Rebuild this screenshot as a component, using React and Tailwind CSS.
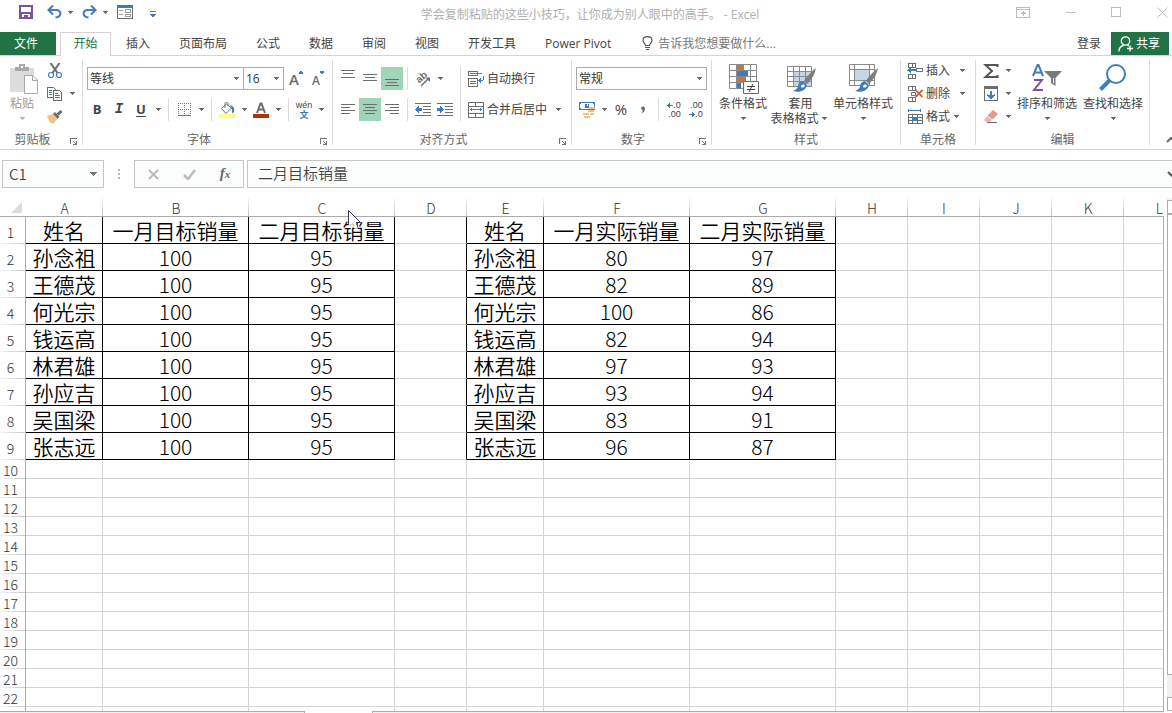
import React from "react";

const tabs = ["插入", "页面布局", "公式", "数据", "审阅", "视图", "开发工具", "Power Pivot"];

const columns = ["A", "B", "C", "D", "E", "F", "G", "H", "I", "J", "K", "L"];

const colWidths = [
  "w-[77px]", "w-[146px]", "w-[146px]", "w-[72px]", "w-[77px]", "w-[146px]",
  "w-[146px]", "w-[72px]", "w-[72px]", "w-[72px]", "w-[72px]", "",
];

const rows = [
  ["姓名", "一月目标销量", "二月目标销量", "", "姓名", "一月实际销量", "二月实际销量"],
  ["孙念祖", 100, 95, "", "孙念祖", 80, 97],
  ["王德茂", 100, 95, "", "王德茂", 82, 89],
  ["何光宗", 100, 95, "", "何光宗", 100, 86],
  ["钱运高", 100, 95, "", "钱运高", 82, 94],
  ["林君雄", 100, 95, "", "林君雄", 97, 93],
  ["孙应吉", 100, 95, "", "孙应吉", 93, 94],
  ["吴国梁", 100, 95, "", "吴国梁", 83, 91],
  ["张志远", 100, 95, "", "张志远", 96, 87],
];

// the last one is the sliver of a row above the sheet tabs
const emptyRows = [10, 11, 12, 13, 14, 15, 16, 17, 18, 19, 20, 21, 22, ""];

const GRAY = "#6d6d6d";
const BLUE = "#3e7cbc";

function Svg({ w, h, crisp, className = "", children }) {
  return (
    <svg
      width={w}
      height={h}
      viewBox={`0 0 ${w} ${h}`}
      fill="none"
      shapeRendering={crisp ? "crispEdges" : "auto"}
      className={`shrink-0 ${className}`}
      aria-hidden="true"
    >
      {children}
    </svg>
  );
}

function Caret({ light }) {
  return (
    <span className="flex w-3 shrink-0 items-center justify-center">
      <Svg w={5} h={3} crisp>
        <path d="M0 0H5V1H4V2H3V3H2V2H1V1H0Z" fill={light ? "#b5b5b5" : "#6a6a6a"} />
      </Svg>
    </span>
  );
}

function Sep() {
  return <div className="mx-1 w-px self-stretch bg-[#dcdcdc]" />;
}

/* small square ribbon button, optionally with a drop-down arrow */
function Tool({ label, active, caret, children }) {
  return (
    <button aria-label={label} className="flex h-[23px] shrink-0 items-center">
      <span className={`flex h-[23px] w-[22px] items-center justify-center ${active ? "bg-[#9fd5b7]" : ""}`}>
        {children}
      </span>
      {caret && <Caret />}
    </button>
  );
}

function Group({ title, width, launcher, children }) {
  return (
    <section className={`flex shrink-0 ${width}`}>
      <div className="flex flex-1 flex-col">
        <div className="flex h-[74px]">{children}</div>
        <div className="flex h-[19px] items-center">
          <span className={`flex-1 text-center text-[#666] ${launcher ? "pr-[5px]" : ""}`}>{title}</span>
          {launcher && (
            <button aria-label={`${title}设置`} className="w-3 pt-1">
              <Svg w={8} h={8} crisp>
                <path d="M0 0H7V1H1V6H0Z" fill="#777" />
                <path d="M3 3H4V4H5V5H6V3H7V7H3V6H5V5H4V4H3Z" fill="#777" />
              </Svg>
            </button>
          )}
        </div>
      </div>
      <div className="my-1 w-px bg-[#dcdcdc]" />
    </section>
  );
}

function Combo({ label, value, width }) {
  return (
    <div className={`relative h-[23px] ${width}`}>
      <select
        aria-label={label}
        className="h-full w-full appearance-none border border-[#ababab] bg-white pl-0.5 text-[12px] text-[#333] outline-none"
      >
        <option>{value}</option>
      </select>
      <span className="pointer-events-none absolute inset-y-0 right-0.5 flex items-center">
        <Caret />
      </span>
    </div>
  );
}

function Lines({ spec }) {
  return (
    <Svg w={14} h={23} crisp>
      {spec.map(([x, y, w], i) => (
        <rect key={i} x={x} y={y} width={w} height="1" fill={GRAY} />
      ))}
    </Svg>
  );
}

function BigButton({ width, icon, lines, light }) {
  return (
    <button className={`flex shrink-0 flex-col items-center pt-[6px] ${width} ${light ? "text-[#9a9a9a]" : ""}`}>
      {icon}
      <span className="mt-0.5 leading-[15px] whitespace-nowrap">{lines[0]}</span>
      <span className="flex h-[15px] items-center leading-[15px] whitespace-nowrap">
        {lines[1]}
        <Caret light={light} />
      </span>
    </button>
  );
}

const PasteIcon = () => (
  <Svg w={32} h={32}>
    <path d="M4 6H28V30H4Z" fill="#dcdcdc" />
    <path d="M9 9V5H13V2H19V5H23V9Z" fill="#a9a9a9" />
    <path d="M15 4H17V6H15Z" fill="#fff" />
    <path d="M18.500 13.500H27L31.500 18V31.500H18.500Z" fill="#fff" stroke="#a9a9a9" />
    <path d="M26.500 13.500V18.500H31.500" stroke="#a9a9a9" />
  </Svg>
);

const Brush = () => (
  <>
    <path d="M31 6C27 9 22 14 19 19L22 22C27 17 30 12 31 6Z" fill="#7d7d7d" />
    <path d="M18 19C15 19 13 22 13 25C12 27 10 28 8 29C14 31 21 29 22 23Z" fill={BLUE} />
    <path d="M16 24C17 22 19 22 20 23.500C19 26 17 26 16 25Z" fill="#fff" />
  </>
);

const ConditionalIcon = () => (
  <Svg w={32} h={32}>
    <path d="M2.500 2.500H29.500V26.500H2.500ZM2 8.500H30M2 14.500H30M2 20.500H30M9.500 2V27M16.500 2V27M23.500 2V27" stroke="#8a8a8a" />
    <path d="M10 3H16V8H10Z" fill="#c8743c" />
    <path d="M10 9H21V14H10Z" fill={BLUE} />
    <path d="M10 15H19V20H10Z" fill="#c8743c" />
    <path d="M10 21H14V26H10Z" fill={BLUE} />
    <path d="M16.500 19.500H31.500V31.500H16.500Z" fill="#fff" stroke="#6d6d6d" />
    <path d="M20 24.500H28M20 27.500H28M26 22L22 30" stroke="#444" />
  </Svg>
);

const TableStyleIcon = () => (
  <Svg w={32} h={32}>
    <path d="M9 10H27V25H9Z" fill="#c6d5e2" />
    <path d="M2.500 4.500H26.500V24.500H2.500ZM2 9.500H27M2 14.500H27M2 19.500H27M8.500 4V25M14.500 4V25M20.500 4V25" stroke="#8a8a8a" />
    <Brush />
  </Svg>
);

const CellStyleIcon = () => (
  <Svg w={32} h={32}>
    <path d="M8 8H22V18H8Z" fill="#c6d5e2" />
    <path d="M2.500 2.500H27.500V23.500H2.500ZM2 7.500H28M2 18.500H28M7.500 2V24M22.500 2V24" stroke="#8a8a8a" />
    <Brush />
  </Svg>
);

const SortIcon = () => (
  <Svg w={32} h={32}>
    <path d="M2 14L6.500 3H7.500L12 14M3.500 10.500H10.500" stroke={BLUE} strokeWidth="2" />
    <path d="M3 18H11L3 28H12" stroke="#7b559b" strokeWidth="2" />
    <path d="M13 9H31L24.500 16V24L20 21V16Z" fill="#7a7a7a" />
    <path d="M22 16H23V21H22Z" fill="#fff" />
  </Svg>
);

const FindIcon = () => (
  <Svg w={32} h={32}>
    <circle cx="19" cy="12" r="9" stroke={BLUE} strokeWidth="2" />
    <path d="M12.500 18.500L3.500 27.500" stroke={BLUE} strokeWidth="4" />
  </Svg>
);

function TitleBar() {
  return (
    <header className="flex h-8 shrink-0 items-start">
      <div className="flex h-6 w-[172px] items-center pl-[19px]">
        <button aria-label="保存">
          <Svg w={14} h={14} crisp>
            <path d="M0 0H14V14H0ZM2 2V7H12V2ZM3 9V12H5V10H9V12H11V9Z" fill="#7b559b" fillRule="evenodd" />
            <path d="M7 10H8V12H7Z" fill="#7b559b" />
          </Svg>
        </button>
        <button aria-label="撤消" className="ml-[14px] flex items-center">
          <Svg w={15} h={14}>
            <path d="M2 5H9C15 5 15 12 8.500 12.500" stroke={BLUE} strokeWidth="2" />
            <path d="M6 0.500L1.500 5L6 9.500" stroke={BLUE} strokeWidth="2" />
          </Svg>
          <span className="pl-0.5"><Caret /></span>
        </button>
        <button aria-label="恢复" className="ml-1.5 flex items-center">
          <Svg w={15} h={14}>
            <path d="M13 5H6C0 5 0 12 6.500 12.500" stroke={BLUE} strokeWidth="2" />
            <path d="M9 0.500L13.500 5L9 9.500" stroke={BLUE} strokeWidth="2" />
          </Svg>
          <span className="pl-0.5"><Caret /></span>
        </button>
        <button aria-label="记录单" className="ml-1.5">
          <Svg w={16} h={14} crisp>
            <path d="M0 0H16V14H0ZM1 3V13H15V3Z" fill={GRAY} fillRule="evenodd" />
            <path d="M1 1H15V3H1Z" fill={BLUE} />
            <path d="M2 5H6V6H2ZM2 9H6V10H2ZM8 4H14V8H8ZM9 5V7H13V5ZM8 9H14V12H8ZM9 10V11H13V10Z" fill="#9a9a9a" fillRule="evenodd" />
          </Svg>
        </button>
        <button aria-label="自定义快速访问工具栏" className="ml-[17px] pt-1">
          <Svg w={6} h={6} crisp>
            <path d="M0 0H6V1H0ZM0 3H6V4H5V5H4V6H2V5H1V4H0Z" fill={BLUE} />
          </Svg>
        </button>
      </div>
      <h1 className="flex-1 text-center leading-[29px] text-[#b0b0b0]">
        学会复制粘贴的这些小技巧，让你成为别人眼中的高手。 - Excel
      </h1>
      <div className="flex h-6 w-[164px] items-center justify-between pr-1 pl-2">
        <button aria-label="功能区显示选项">
          <Svg w={14} h={11} crisp>
            <path d="M0.500 0.500H13.500V10.500H0.500ZM0 2.500H14" stroke="#bdbdbd" />
            <path d="M7 4H8V9H7ZM6 5H9V6H6ZM5 6H10V7H5Z" fill="#bdbdbd" />
          </Svg>
        </button>
        <button aria-label="最小化">
          <Svg w={10} h={10} crisp><path d="M0 5.500H10" stroke="#bdbdbd" /></Svg>
        </button>
        <button aria-label="最大化">
          <Svg w={10} h={10} crisp><path d="M0.500 0.500H9.500V9.500H0.500Z" stroke="#bdbdbd" /></Svg>
        </button>
        <button aria-label="关闭">
          <Svg w={11} h={11}><path d="M0.500 0.500L10.500 10.500M10.500 0.500L0.500 10.500" stroke="#bdbdbd" /></Svg>
        </button>
      </div>
    </header>
  );
}

function TabBar() {
  return (
    <nav className="flex h-6 shrink-0 items-stretch border-b border-[#d4d4d4] text-[#444]">
      <button className="w-14 bg-[#217346] pr-1 text-white">文件</button>
      <button className="-mb-px ml-1 w-[51px] border border-b-0 border-[#d4d4d4] bg-white pb-0.5 text-[#217346]">
        开始
      </button>
      <div className="ml-[15px] flex gap-[29px]">
        {tabs.map((t) => (
          <button key={t} className="whitespace-nowrap">{t}</button>
        ))}
      </div>
      <label className="ml-[31px] flex flex-1 items-center gap-[5px]">
        <Svg w={11} h={15}>
          <path d="M3.500 9.500C3.500 7.500 1 7 1 4.500C1 2.200 3 0.700 5.500 0.700S10 2.200 10 4.500C10 7 7.500 7.500 7.500 9.500Z" stroke="#555" strokeWidth="1.200" />
          <path d="M3 11.500H8M4 13.500H7" stroke="#555" />
        </Svg>
        <input
          aria-label="告诉我您想要做什么"
          placeholder="告诉我您想要做什么..."
          className="w-40 bg-transparent outline-none placeholder:text-[#777]"
        />
      </label>
      <button className="mr-[10px]">登录</button>
      <button className="mr-[3px] flex w-[58px] items-center gap-0.5 bg-[#217346] pl-[7px] text-white">
        <Svg w={16} h={16}>
          <circle cx="7.500" cy="5" r="4.200" stroke="#fff" strokeWidth="1.300" />
          <path d="M1 15.500C1 12 3 10 5.500 9.500M9.500 9.200L11 10M9 12.500H15M12 9.500V15.500" stroke="#fff" strokeWidth="1.300" />
        </Svg>
        共享
      </button>
    </nav>
  );
}

function Ribbon() {
  return (
    <div className="flex shrink-0 overflow-hidden border-b border-[#d4d4d4] text-[#444]">
      <Group title="剪贴板" width="w-[83px]" launcher>
        <BigButton width="w-[44px]" light icon={<PasteIcon />} lines={["粘贴", ""]} />
        <div className="flex flex-col pt-[3px]">
          <Tool label="剪切">
            <Svg w={16} h={16}>
              <path d="M3.500 0L10.500 10M12.500 0L5.500 10" stroke={GRAY} strokeWidth="2" />
              <circle cx="4" cy="12" r="2.500" stroke={BLUE} strokeWidth="1.200" />
              <circle cx="12" cy="12" r="2.500" stroke={BLUE} strokeWidth="1.200" />
            </Svg>
          </Tool>
          <Tool label="复制" caret>
            <Svg w={16} h={14} crisp>
              <path d="M0.500 0.500H6.500L8.500 2.500V10.500H0.500Z" fill="#fff" stroke={GRAY} />
              <path d="M2 3.500H5M2 5.500H5M2 7.500H5" stroke={BLUE} />
              <path d="M6.500 3.500H12.500L14.500 5.500V13.500H6.500Z" fill="#fff" stroke={GRAY} />
              <path d="M8 6.500H11M8 8.500H13M8 10.500H13" stroke={BLUE} />
            </Svg>
          </Tool>
          <Tool label="格式刷">
            <Svg w={16} h={14}>
              <path d="M0 6L6 4L10 9L6 14L3 12.500Z" fill="#f6bd7c" />
              <path d="M6 4L8 2L12.500 6.500L10.500 9Z" fill={GRAY} />
              <path d="M9.500 3.500L13.500 0L15.500 2L12 5.500Z" fill={GRAY} />
            </Svg>
          </Tool>
        </div>
      </Group>

      <Group title="字体" width="w-[250px]" launcher>
        <div className="flex flex-col gap-2 pt-[11px] pl-[3px]">
          <div className="flex items-center pl-px">
            <Combo label="字体" value="等线" width="w-[157px]" />
            <Combo label="字号" value="16" width="-ml-px w-[41px]" />
            <div className="flex pl-px">
              <Tool label="增大字号">
                <span className="pt-0.5 text-[15px] font-semibold text-[#6d6d6d]">A</span>
                <Svg w={4} h={3} crisp className="mb-3"><path d="M1 0H3V1H4V3H0V1H1Z" fill={BLUE} /></Svg>
              </Tool>
              <Tool label="减小字号">
                <span className="pt-1 text-[12px] font-semibold text-[#6d6d6d]">A</span>
                <Svg w={4} h={3} crisp className="mb-3"><path d="M0 0H4V2H3V3H1V2H0Z" fill={BLUE} /></Svg>
              </Tool>
            </div>
          </div>
          <div className="flex items-center">
            <Tool label="加粗"><span className="text-[13px] font-bold">B</span></Tool>
            <Tool label="倾斜"><span className="font-['Liberation_Mono',monospace] text-[14px] font-bold italic">I</span></Tool>
            <Tool label="下划线" caret><span className="text-[13px] font-bold underline underline-offset-2">U</span></Tool>
            <Sep />
            <Tool label="边框" caret>
              <Svg w={13} h={13} crisp>
                <path d="M0.500 0V13M6.500 0V13M12.500 0V13M0 0.500H13M0 6.500H13" stroke="#777" strokeDasharray="1 1" />
                <path d="M0 12.500H13" stroke="#777" />
              </Svg>
            </Tool>
            <Sep />
            <Tool label="填充颜色" caret>
              <Svg w={16} h={16}>
                <path d="M2.500 6.500L7.500 2L12.500 6L7 11.500Z" stroke={GRAY} />
                <path d="M6 6V1.500C6 0 9 0 9 1.500V4" stroke={GRAY} />
                <path d="M11 3C14 4 16 6 15 10L13 11.500V7Z" fill={BLUE} />
                <path d="M0 12H16V16H0Z" fill="#fdfd80" />
              </Svg>
            </Tool>
            <Tool label="字体颜色" caret>
              <Svg w={16} h={16}>
                <path d="M4 11L7.500 1.500H8.500L12 11M5.500 7.500H10.500" stroke={GRAY} strokeWidth="2" />
                <path d="M0 12H16V16H0Z" fill="#b83000" />
              </Svg>
            </Tool>
            <Sep />
            <Tool label="显示拼音字段" caret>
              <span className="flex flex-col items-center">
                <span className="font-['Liberation_Sans',sans-serif] text-[9px] leading-[10px]">wén</span>
                <span className="font-['Liberation_Sans','Noto_Sans_CJK_SC',sans-serif] text-[9px] leading-[10px] font-bold text-[#3e7cbc]">文</span>
              </span>
            </Tool>
          </div>
        </div>
      </Group>

      <Group title="对齐方式" width="w-[239px]" launcher>
        <div className="flex flex-col gap-2 pt-[11px] pl-1">
          <div className="flex">
            <Tool label="顶端对齐"><Lines spec={[[0, 3, 14], [2, 6, 10], [0, 10, 14]]} /></Tool>
            <Tool label="垂直居中"><Lines spec={[[0, 7, 14], [2, 10, 10], [0, 13, 14]]} /></Tool>
            <Tool label="底端对齐" active><Lines spec={[[0, 12, 14], [2, 15, 10], [0, 18, 14]]} /></Tool>
            <Sep />
            <Tool label="方向" caret>
              <Svg w={20} h={20}>
                <text
                  x="3"
                  y="12"
                  transform="rotate(-42 8 9)"
                  fontFamily="Liberation Sans, sans-serif"
                  fontSize="10"
                  fontWeight="bold"
                  fill={GRAY}
                >
                  ab
                </text>
                <path d="M8 17L15 10" stroke={GRAY} strokeWidth="1.500" />
                <path d="M12.500 8.500H17V13Z" fill={GRAY} />
              </Svg>
            </Tool>
          </div>
          <div className="flex">
            <Tool label="左对齐"><Lines spec={[[0, 6, 14], [0, 9, 9], [0, 12, 14], [0, 15, 9]]} /></Tool>
            <Tool label="居中" active><Lines spec={[[0, 6, 14], [2, 9, 10], [0, 12, 14], [2, 15, 10]]} /></Tool>
            <Tool label="右对齐"><Lines spec={[[0, 6, 14], [5, 9, 9], [0, 12, 14], [5, 15, 9]]} /></Tool>
            <Sep />
            <Tool label="减少缩进量">
              <Svg w={16} h={14} crisp>
                <path d="M0 0.500H16M8 3.500H16M8 6.500H16M8 9.500H16M0 12.500H16" stroke={GRAY} />
                <path d="M0 6H1V5H2V4H3V3H4V5H7V8H4V10H3V9H2V8H1V7H0Z" fill={BLUE} />
              </Svg>
            </Tool>
            <Tool label="增加缩进量">
              <Svg w={16} h={14} crisp>
                <path d="M0 0.500H16M8 3.500H16M8 6.500H16M8 9.500H16M0 12.500H16" stroke={GRAY} />
                <path d="M7 6H6V5H5V4H4V3H3V5H0V8H3V10H4V9H5V8H6V7H7Z" fill={BLUE} />
              </Svg>
            </Tool>
          </div>
        </div>
        <div className="flex h-[65px] pt-[10px]"><Sep /></div>
        <div className="flex flex-col gap-2 pt-[11px] pl-[3px]">
          <button className="flex h-[23px] items-center gap-[3px]">
            <Svg w={16} h={16} crisp>
              <path d="M0.500 0.500H9.500V4.500H0.500ZM0.500 7.500H9.500V15.500H0.500Z" stroke={GRAY} />
              <path d="M2 2.500H14M2 10.500H8M2 12.500H8" stroke={BLUE} />
              <path d="M15 5H16V9H15V10H13V12H12V11H11V10H10V9H11V8H12V7H13V9H15Z" fill={BLUE} />
            </Svg>
            自动换行
          </button>
          <button className="flex h-[23px] items-center gap-[3px]">
            <Svg w={16} h={16} crisp>
              <path d="M0.500 0.500H15.500V15.500H0.500ZM0 4.500H16M0 11.500H16M7.500 0V4M7.500 12V16" stroke={GRAY} />
              <path d="M2 7.500H14" stroke={BLUE} />
              <path d="M2 7H3V6H4V9H3V8H2ZM14 7H13V6H12V9H13V8H14Z" fill={BLUE} />
            </Svg>
            合并后居中
            <span className="pl-0.5"><Caret /></span>
          </button>
        </div>
      </Group>

      <Group title="数字" width="w-[140px]" launcher>
        <div className="flex flex-col gap-2 pt-[11px] pl-1">
          <Combo label="数字格式" value="常规" width="w-[131px]" />
          <div className="flex">
            <Tool label="会计数字格式" caret>
              <Svg w={16} h={16} crisp>
                <path d="M0 0H16V8H0ZM2 1V2H1V6H2V7H14V6H15V2H14V1Z" fill={BLUE} fillRule="evenodd" />
                <path d="M6 2H10V6H6Z" fill={BLUE} />
                <path d="M8 2H9V4H8Z" fill="#fff" />
                <path d="M10 5H16V7H10ZM9 8H15V10H9Z" fill="#f6bd7c" />
                <path d="M4 11H10V13H4ZM11 11H15V13H11ZM5 14H11V16H5Z" fill="#f6bd7c" />
              </Svg>
            </Tool>
            <Tool label="百分比样式"><span className="text-[15px]">%</span></Tool>
            <Tool label="千位分隔样式">
              <Svg w={6} h={8}><path d="M1 2A2 2 0 1 1 5 3C5 5 3.500 7 1 7.500C2 6.500 3 5.500 2.500 4A2 2 0 0 1 1 2Z" fill={GRAY} /></Svg>
            </Tool>
            <Sep />
            <Tool label="增加小数位数">
              <span className="flex flex-col items-end font-['Liberation_Sans',sans-serif] text-[9px] leading-[9px]">
                <span className="flex items-center">
                  <Svg w={6} h={5} crisp><path d="M0 2H1V1H2V0H3V2H6V3H3V5H2V4H1V3H0Z" fill={BLUE} /></Svg>.0
                </span>
                <span>.00</span>
              </span>
            </Tool>
            <Tool label="减少小数位数">
              <span className="flex flex-col items-end font-['Liberation_Sans',sans-serif] text-[9px] leading-[9px]">
                <span>.00</span>
                <span className="flex items-center">
                  <Svg w={6} h={5} crisp><path d="M6 2H5V1H4V0H3V2H0V3H3V5H4V4H5V3H6Z" fill={BLUE} /></Svg>.0
                </span>
              </span>
            </Tool>
          </div>
        </div>
      </Group>

      <Group title="样式" width="w-[189px]">
        <div className="flex pl-1">
          <BigButton width="w-[54px]" icon={<ConditionalIcon />} lines={["条件格式", ""]} />
          <BigButton width="w-[61px]" icon={<TableStyleIcon />} lines={["套用", "表格格式"]} />
          <BigButton width="w-[64px]" icon={<CellStyleIcon />} lines={["单元格样式", ""]} />
        </div>
      </Group>

      <Group title="单元格" width="w-[75px]">
        <div className="flex flex-col pt-[3px] pl-[3px]">
          <button className="flex h-[23px] items-center">
            <span className="flex w-[22px] justify-center">
              <Svg w={16} h={16} crisp>
                <path d="M1.500 0.500H8.500V4.500H1.500ZM5.500 0V4M1.500 11.500H8.500V15.500H1.500ZM5.500 11V16M9.500 5.500H15.500V8.500H9.500Z" stroke={GRAY} />
                <path d="M0 7H1V6H2V5H3V4H4V6H9V8H4V10H3V9H2V8H0Z" fill={BLUE} />
              </Svg>
            </span>
            插入
            <span className="ml-1.5"><Caret /></span>
          </button>
          <button className="flex h-[23px] items-center">
            <span className="flex w-[22px] justify-center">
              <Svg w={16} h={16}>
                <path d="M1.500 0.500H8.500V4.500H1.500ZM5.500 0V4M1.500 11.500H8.500V15.500H1.500ZM5.500 11V16M4.500 6.500H8.500V9.500H4.500Z" stroke={GRAY} />
                <path d="M8.500 4L15.500 11M15.500 4L8.500 11" stroke="#c8643c" strokeWidth="1.800" />
              </Svg>
            </span>
            删除
            <span className="ml-1.5"><Caret /></span>
          </button>
          <button className="flex h-[23px] items-center">
            <span className="flex w-[22px] justify-center">
              <Svg w={16} h={16} crisp>
                <path d="M1.500 5.500H15.500V14.500H1.500ZM5.500 5V15M10.500 5V15M1 8.500H16M1 11.500H16" stroke={GRAY} />
                <path d="M5 8H11V12H5Z" fill={BLUE} />
                <path d="M1 1.500H14M1.500 0V3M13.500 0V3" stroke={BLUE} />
              </Svg>
            </span>
            格式
            <Caret />
          </button>
        </div>
      </Group>

      <Group title="编辑" width="w-[174px]">
        <div className="flex flex-col pt-[3px] pl-1">
          <Tool label="自动求和" caret>
            <Svg w={16} h={16}>
              <path d="M14.500 4V2H2.500L9 8L2.500 14H14.500V12" stroke="#555" strokeWidth="2" />
            </Svg>
          </Tool>
          <Tool label="填充" caret>
            <Svg w={14} h={15} crisp>
              <path d="M0.500 0.500H13.500V14.500H0.500Z" stroke={GRAY} />
              <path d="M0 0H14V3H0Z" fill={GRAY} />
              <path d="M6 5H8V9H10V8H11V10H10V11H9V12H8V13H6V12H5V11H4V10H3V8H4V9H6Z" fill={BLUE} />
            </Svg>
          </Tool>
          <Tool label="清除" caret>
            <Svg w={14} h={14}>
              <path d="M9 0L14 4L8.500 9.500L3.500 5.500Z" fill="#e39a90" />
              <path d="M3 6L8 10L6 12H2L0 10Z" fill="#edb5ad" />
              <path d="M3 12.500H13" stroke={GRAY} />
            </Svg>
          </Tool>
        </div>
        <BigButton width="w-[66px]" icon={<SortIcon />} lines={["排序和筛选", ""]} />
        <BigButton width="w-[66px]" icon={<FindIcon />} lines={["查找和选择", ""]} />
      </Group>

      <div className="flex flex-1 items-end justify-end">
        <button aria-label="折叠功能区" className="-mr-1 pb-1.5">
          <Svg w={10} h={6}><path d="M1 5L5 1L9 5" stroke="#666" strokeWidth="2" /></Svg>
        </button>
      </div>
    </div>
  );
}

function FormulaBar() {
  return (
    <div className="flex shrink-0 items-center overflow-hidden py-[10px] pl-0.5 text-[15px] text-[#444]">
      <div className="flex h-7 w-[102px] items-center border border-[#c6c6c6] bg-[#fbfdfc] pr-[3px]">
        <input aria-label="名称框" defaultValue="C1" className="h-full w-full min-w-0 flex-1 bg-transparent pb-0.5 pl-1.5 outline-none" />
        <button aria-label="名称框列表">
          <Svg w={8} h={5} crisp className="mr-0.5">
            <path d="M0 0H7V1H6V2H5V3H4V4H3V3H2V2H1V1H0Z" fill="#777" />
          </Svg>
        </button>
      </div>
      <div className="flex w-[30px] justify-center">
        <Svg w={2} h={11} crisp>
          <path d="M0 0H2V2H0ZM0 4H2V6H0ZM0 8H2V10H0Z" fill="#b5b5b5" />
        </Svg>
      </div>
      <div className="flex h-7 w-[110px] items-center border border-[#c6c6c6] bg-[#fbfdfc]">
        <button aria-label="取消" className="flex flex-1 justify-center">
          <Svg w={11} h={11}><path d="M1 1L10 10M10 1L1 10" stroke="#bdbdbd" strokeWidth="2" /></Svg>
        </button>
        <button aria-label="输入" className="flex flex-1 justify-center">
          <Svg w={13} h={11}><path d="M1 6L5 10L12 1" stroke="#bdbdbd" strokeWidth="2.500" /></Svg>
        </button>
        <button aria-label="插入函数" className="flex-1 pb-0.5 font-['Liberation_Serif',serif] text-[15px] leading-[20px] font-bold text-[#666] italic">
          f<span className="text-[11px]">x</span>
        </button>
      </div>
      <div className="ml-[3px] flex h-7 flex-1 items-center border border-r-0 border-[#c6c6c6] bg-[#fbfdfc]">
        <input aria-label="编辑栏" defaultValue="二月目标销量" className="h-full flex-1 bg-transparent pb-[3px] pl-[10px] outline-none" />
        <button aria-label="展开编辑栏" className="-mr-1">
          <Svg w={9} h={6}><path d="M1 1L4.500 4.500L8 1" stroke="#555" strokeWidth="2" /></Svg>
        </button>
      </div>
    </div>
  );
}

function RowHead({ n, tall }) {
  return (
    <th
      className={`border-r border-[#ababab] bg-[linear-gradient(to_right,#f4f4f4,#c8c8c8)] bg-[length:100%_1px] bg-bottom bg-no-repeat p-0 pr-1 align-bottom text-[14px] leading-[17px] font-light text-[#333] ${
        tall ? "pb-[3px]" : ""
      }`}
    >
      {n}
    </th>
  );
}

function Sheet() {
  return (
    <div className="relative min-w-0 flex-1 overflow-hidden">
      <table className="w-full min-w-[1195px] table-fixed border-separate border-spacing-0 text-center">
        <colgroup>
          <col className="w-[26px]" />
          {colWidths.map((w, i) => (
            <col key={i} className={w} />
          ))}
        </colgroup>
        <thead>
          <tr className="h-[19px]">
            <th className="border-b border-[#ababab] p-0 align-bottom">
              <Svg w={11} h={11} className="mb-[3px] ml-[11px]"><path d="M11 0V11H0Z" fill="#dcdcdc" /></Svg>
            </th>
            {columns.map((c) => (
              <th
                key={c}
                className="border-b border-[#ababab] bg-[linear-gradient(to_bottom,#f4f4f4,#c0c0c0)] bg-[length:1px_100%] bg-right bg-no-repeat p-0 pt-0.5 text-[14px] leading-4 font-light text-[#333]"
              >
                {c}
              </th>
            ))}
          </tr>
        </thead>
        <tbody>
          {rows.map((row, r) => (
            <tr key={r} className="h-[27px]">
              <RowHead n={r + 1} tall />
              {columns.map((c, i) => {
                const filled = i < 7 && i !== 3;
                const weight = typeof row[i] === "number" ? "font-light" : "font-[350]";
                return (
                  <td
                    key={c}
                    className={`border-r border-b p-0 align-bottom text-[21px] leading-[26px] whitespace-nowrap text-black ${weight} ${
                      filled ? "border-black" : i === 3 ? "border-r-black border-b-[#d4d4d4]" : "border-[#d4d4d4]"
                    }`}
                  >
                    {row[i]}
                  </td>
                );
              })}
            </tr>
          ))}
          {emptyRows.map((n) => (
            <tr key={n} className="h-[19px]">
              <RowHead n={n} />
              {columns.map((c) => (
                <td key={c} className="border-r border-b border-[#d4d4d4] p-0" />
              ))}
            </tr>
          ))}
        </tbody>
      </table>
      <div className="absolute top-[18px] right-0 bottom-0 w-px bg-[#ababab]" />
      {/* mouse pointer */}
      <Svg w={14} h={22} className="absolute top-3 left-[348px]">
        <path d="M0.500 0.500V17L4.500 13.500L7 20L10 18.500L7.500 12.500H12.500Z" fill="#fff" fillOpacity="0.85" />
        <path d="M0.500 15V0.500L12.500 12.500H8" stroke="#3a3050" />
      </Svg>
    </div>
  );
}

function ScrollBar() {
  return (
    <div className="ml-[3px] flex w-[5px] shrink-0 flex-col overflow-hidden bg-[#f1f1f1] pt-0.5">
      <button aria-label="向上滚动" className="h-[14px] w-4 border border-[#ababab] bg-white" />
      <div className="h-[461px] w-4 border border-[#ababab] bg-white" />
      <div className="flex-1" />
      <button aria-label="向下滚动" className="h-[14px] w-4 border border-[#ababab] bg-white" />
    </div>
  );
}

export default function App() {
  return (
    <div className="flex h-screen flex-col overflow-hidden bg-white font-['Open_Sans','Noto_Sans_CJK_SC',sans-serif] text-[12px]">
      <TitleBar />
      <TabBar />
      <Ribbon />
      <main className="flex min-h-0 flex-1 flex-col font-['Noto_Sans_CJK_SC',sans-serif] font-[350]">
        <FormulaBar />
        <div className="flex min-h-0 flex-1">
          <Sheet />
          <ScrollBar />
        </div>
        <div className="flex h-0.5 shrink-0">
          <div className="w-[305px] border-t border-r border-[#ababab] bg-[#f1f1f1]" />
          <div className="w-[67px]" />
          <div className="mr-2 flex-1 border-t border-l border-[#ababab] bg-[#f1f1f1]" />
        </div>
      </main>
    </div>
  );
}
